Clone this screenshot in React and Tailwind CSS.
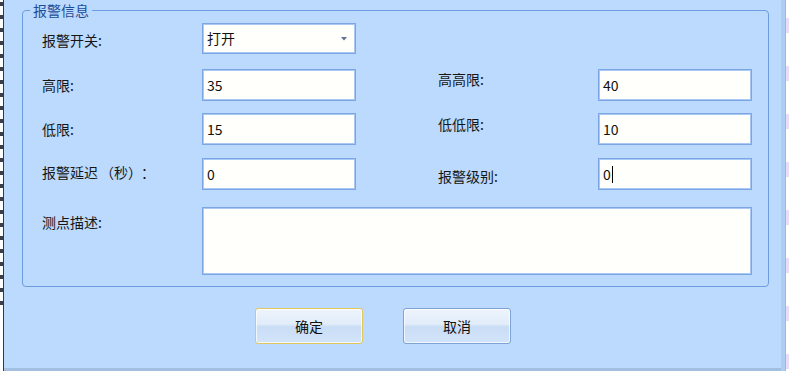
import React from 'react';

const font = { fontFamily: '"Noto Sans CJK SC", "Microsoft YaHei", sans-serif' };

function TextBox({ value, width = 'w-[154px]', caret }) {
  return (
    <div
      className={`${width} h-[32px] bg-[#fffffb] border border-[#7ba5e4] shadow-[inset_0_0_0_1px_#a9c9f2] flex items-center pl-[4px] text-[14px] text-[#111]`}
    >
      <span>{value}</span>
      {caret && <span className="w-px h-[17px] bg-black ml-px" />}
    </div>
  );
}

function Label({ children, mt, width }) {
  return (
    <div className={`${width} ${mt} leading-[16px] text-[14px] text-[#161616] whitespace-nowrap`}>
      {children}
    </div>
  );
}

function DialogButton({ label, focused }) {
  return (
    <button
      className={`w-[108px] h-[36px] rounded-[3px] border text-[14px] text-[#111] shadow-[inset_0_0_0_1px_rgba(255,255,255,0.7)] bg-[linear-gradient(to_bottom,#eef4fc_0%,#e1ecfa_45%,#c9ddf6_52%,#d2e4f9_100%)] ${
        focused ? 'border-[#e2c75c]' : 'border-[#7da3d4]'
      }`}
    >
      {label}
    </button>
  );
}

export default function App() {
  return (
    <div className="w-[789px] h-[371px] flex overflow-hidden bg-white" style={font}>
      {/* window behind, left edge */}
      <div className="w-[3px] h-full bg-white flex flex-col gap-[9px] pt-[2px]">
        {Array.from({ length: 24 }).map((_, i) => (
          <div key={i} className="h-[4px] w-[3px] bg-[#3a3f4a]" />
        ))}
      </div>
      <div className="w-px h-full bg-[#2f3a4b]" />

      {/* dialog */}
      <div className="flex-1 h-full bg-[#bbdafd] flex flex-col border-b-[3px] border-[#a3bfe2]">
        <div className="relative ml-[18px] mt-[10px] w-[747px] h-[277px] border border-[#6e9ddf] rounded-[4px] flex flex-col pl-[19px]">
          <div className="absolute left-[7px] -top-[10px] px-[3px] bg-[#bbdafd] leading-[18px] text-[14px] text-[#1d4c9a]">
            报警信息
          </div>

          {/* row 1 */}
          <div className="flex mt-[12px] h-[31px] items-start">
            <Label mt="mt-[9px]" width="w-[160px]">报警开关:</Label>
            <div className="w-[154px] h-[31px] bg-[#fffffb] border border-[#7ba5e4] shadow-[inset_0_0_0_1px_#a9c9f2] flex items-center justify-between pl-[4px] pr-[8px] text-[14px] text-[#111]">
              <span>打开</span>
              <svg width="6" height="4" viewBox="0 0 6 4">
                <path d="M0 0h6L3 3.5z" fill="#5d7096" />
              </svg>
            </div>
          </div>

          {/* row 2 */}
          <div className="flex mt-[15px] h-[32px] items-start">
            <Label mt="mt-[8px]" width="w-[160px]">高限:</Label>
            <TextBox value="35" />
            <div className="w-[82px]" />
            <Label mt="mt-[2px]" width="w-[160px]">高高限:</Label>
            <TextBox value="40" />
          </div>

          {/* row 3 */}
          <div className="flex mt-[12px] h-[32px] items-start">
            <Label mt="mt-[8px]" width="w-[160px]">低限:</Label>
            <TextBox value="15" />
            <div className="w-[82px]" />
            <Label mt="mt-[3px]" width="w-[160px]">低低限:</Label>
            <TextBox value="10" />
          </div>

          {/* row 4 */}
          <div className="flex mt-[13px] h-[32px] items-start">
            <Label mt="mt-[6px]" width="w-[160px]">
              报警延迟<span className="ml-[2px]">（秒）</span>
              <span className="ml-[6px]">：</span>
            </Label>
            <TextBox value="0" />
            <div className="w-[82px]" />
            <Label mt="mt-[10px]" width="w-[160px]">报警级别:</Label>
            <TextBox value="0" caret />
          </div>

          {/* row 5 */}
          <div className="flex mt-[17px] items-start">
            <Label mt="mt-[7px]" width="w-[160px]">测点描述:</Label>
            <div className="w-[550px] h-[68px] bg-[#fffffb] border border-[#7ba5e4] shadow-[inset_0_0_0_1px_#a9c9f2]" />
          </div>
        </div>

        {/* buttons */}
        <div className="flex gap-[40px] ml-[251px] mt-[21px]">
          <DialogButton label="确定" focused />
          <DialogButton label="取消" />
        </div>
      </div>

      {/* right edge */}
      <div className="w-[4px] h-full bg-[#aecdf3]" />
      <div className="w-px h-full bg-[#9fb8d8]" />
      <div className="w-[3px] h-full bg-[repeating-linear-gradient(to_bottom,#ffffff_0px,#ffffff_18px,#e8def8_18px,#e8def8_33px,#ffffff_33px,#ffffff_48px)]" />
    </div>
  );
}
